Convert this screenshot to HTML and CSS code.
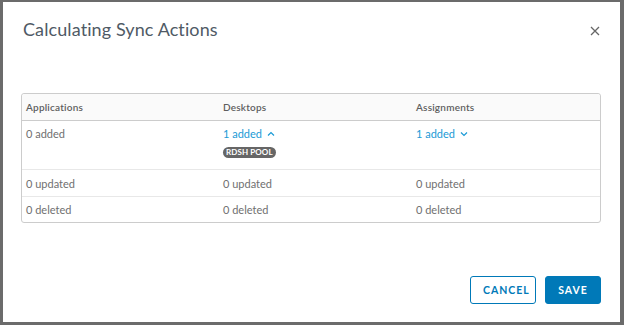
FILE: index.html
```html
<!DOCTYPE html>
<html>
<head>
<meta charset="utf-8">
<link rel="stylesheet" href="styles.css">
</head>
<body>
<div class="modal">
  <div class="modal-header">
    <h3 class="modal-title">Calculating Sync Actions</h3>
    <button class="close" aria-label="Close">
      <svg width="10" height="10" viewBox="0 0 10 10"><path d="M1 1L9 9M9 1L1 9" stroke="#666" stroke-width="1.3" fill="none"/></svg>
    </button>
  </div>
  <div class="modal-body">
    <table class="grid">
      <thead>
        <tr><th class="c1">Applications</th><th class="c2">Desktops</th><th class="c3">Assignments</th></tr>
      </thead>
      <tbody>
        <tr class="tall">
          <td>0 added</td>
          <td><span class="link">1 added <svg class="chev" width="8" height="6" viewBox="0 0 8 6"><path d="M1 4.5L4 1.5L7 4.5" stroke="#1a9ad6" stroke-width="1.2" fill="none"/></svg></span>
            <div><span class="badge">RDSH POOL</span></div></td>
          <td><span class="link">1 added <svg class="chev" width="8" height="6" viewBox="0 0 8 6"><path d="M1 1.5L4 4.5L7 1.5" stroke="#1a9ad6" stroke-width="1.2" fill="none"/></svg></span></td>
        </tr>
        <tr><td>0 updated</td><td>0 updated</td><td>0 updated</td></tr>
        <tr><td>0 deleted</td><td>0 deleted</td><td>0 deleted</td></tr>
      </tbody>
    </table>
  </div>
  <div class="modal-footer">
    <button class="btn btn-outline">CANCEL</button>
    <button class="btn btn-primary">SAVE</button>
  </div>
</div>
</body>
</html>
```
FILE: styles.css
```css
html, body { margin: 0; padding: 0; }
body {
  background: #6b6b6b;
  width: 624px;
  height: 325px;
  overflow: hidden;
  font-family: "Lato", "Open Sans", sans-serif;
  padding: 2px 0 0 3px;
  box-sizing: border-box;
}
.modal {
  width: 617px;
  height: 320px;
  background: #fff;
  box-sizing: border-box;
  padding: 0 19px 0 18px;
  display: flex;
  flex-direction: column;
}
.modal-header {
  display: flex;
  align-items: center;
  justify-content: space-between;
  height: 54px;
}
.modal-title {
  margin: 0 0 0 2px;
  font-weight: 400;
  font-size: 18px;
  color: #4f5a65;
  letter-spacing: 0.1px;
}
.close {
  border: 0;
  background: none;
  padding: 0;
  margin-right: -4px;
  margin-top: 3px;
  width: 20px;
  height: 20px;
  display: flex;
  align-items: center;
  justify-content: center;
}
.modal-body { padding-top: 37px; }
.grid {
  width: 580px;
  border-collapse: separate;
  border-spacing: 0;
  border: 1px solid #ccc;
  border-radius: 3px;
  font-size: 11px;
  color: #707070;
  table-layout: fixed;
}
.grid th {
  background: #fafafa;
  font-weight: 600;
  color: #5e5e5e;
  text-align: left;
  height: 26px;
  padding: 0 4px;
  border-bottom: 1px solid #ccc;
  font-size: 10px;
  letter-spacing: 0.2px;
}
.c1 { width: 189px; }
.c2 { width: 185px; }
.grid th:first-child { border-top-left-radius: 3px; }
.grid th:last-child { border-top-right-radius: 3px; }
.grid td {
  padding: 0 4px;
  height: 26px;
  border-bottom: 1px solid #e8e8e8;
  vertical-align: middle;
}
.grid tr:last-child td { border-bottom: 0; height: 25px; }
.grid tr.tall td { vertical-align: top; padding-top: 6px; height: 42px; }
.link { color: #1a9ad6; }
.chev { margin-left: 2px; vertical-align: 1px; }
.badge {
  display: inline-block;
  margin-top: 7px;
  background: #666;
  color: #fff;
  font-size: 8px;
  font-weight: 700;
  border-radius: 6px;
  padding: 0 3px;
  height: 11px;
  line-height: 11px;
  letter-spacing: 0.1px;
}
.modal-footer {
  margin-top: auto;
  display: flex;
  justify-content: flex-end;
  gap: 9px;
  padding-bottom: 18px;
}
.btn {
  height: 28px;
  font-family: inherit;
  font-size: 10.5px;
  font-weight: 700;
  letter-spacing: 1px;
  border-radius: 3px;
  box-sizing: border-box;
  padding: 0 12px;
}
.btn-outline {
  width: 66px;
  background: #fff;
  border: 1px solid #0079b8;
  color: #0079b8;
}
.btn-primary {
  width: 56px;
  background: #0079b8;
  border: 1px solid #0079b8;
  color: #fff;
}
```
